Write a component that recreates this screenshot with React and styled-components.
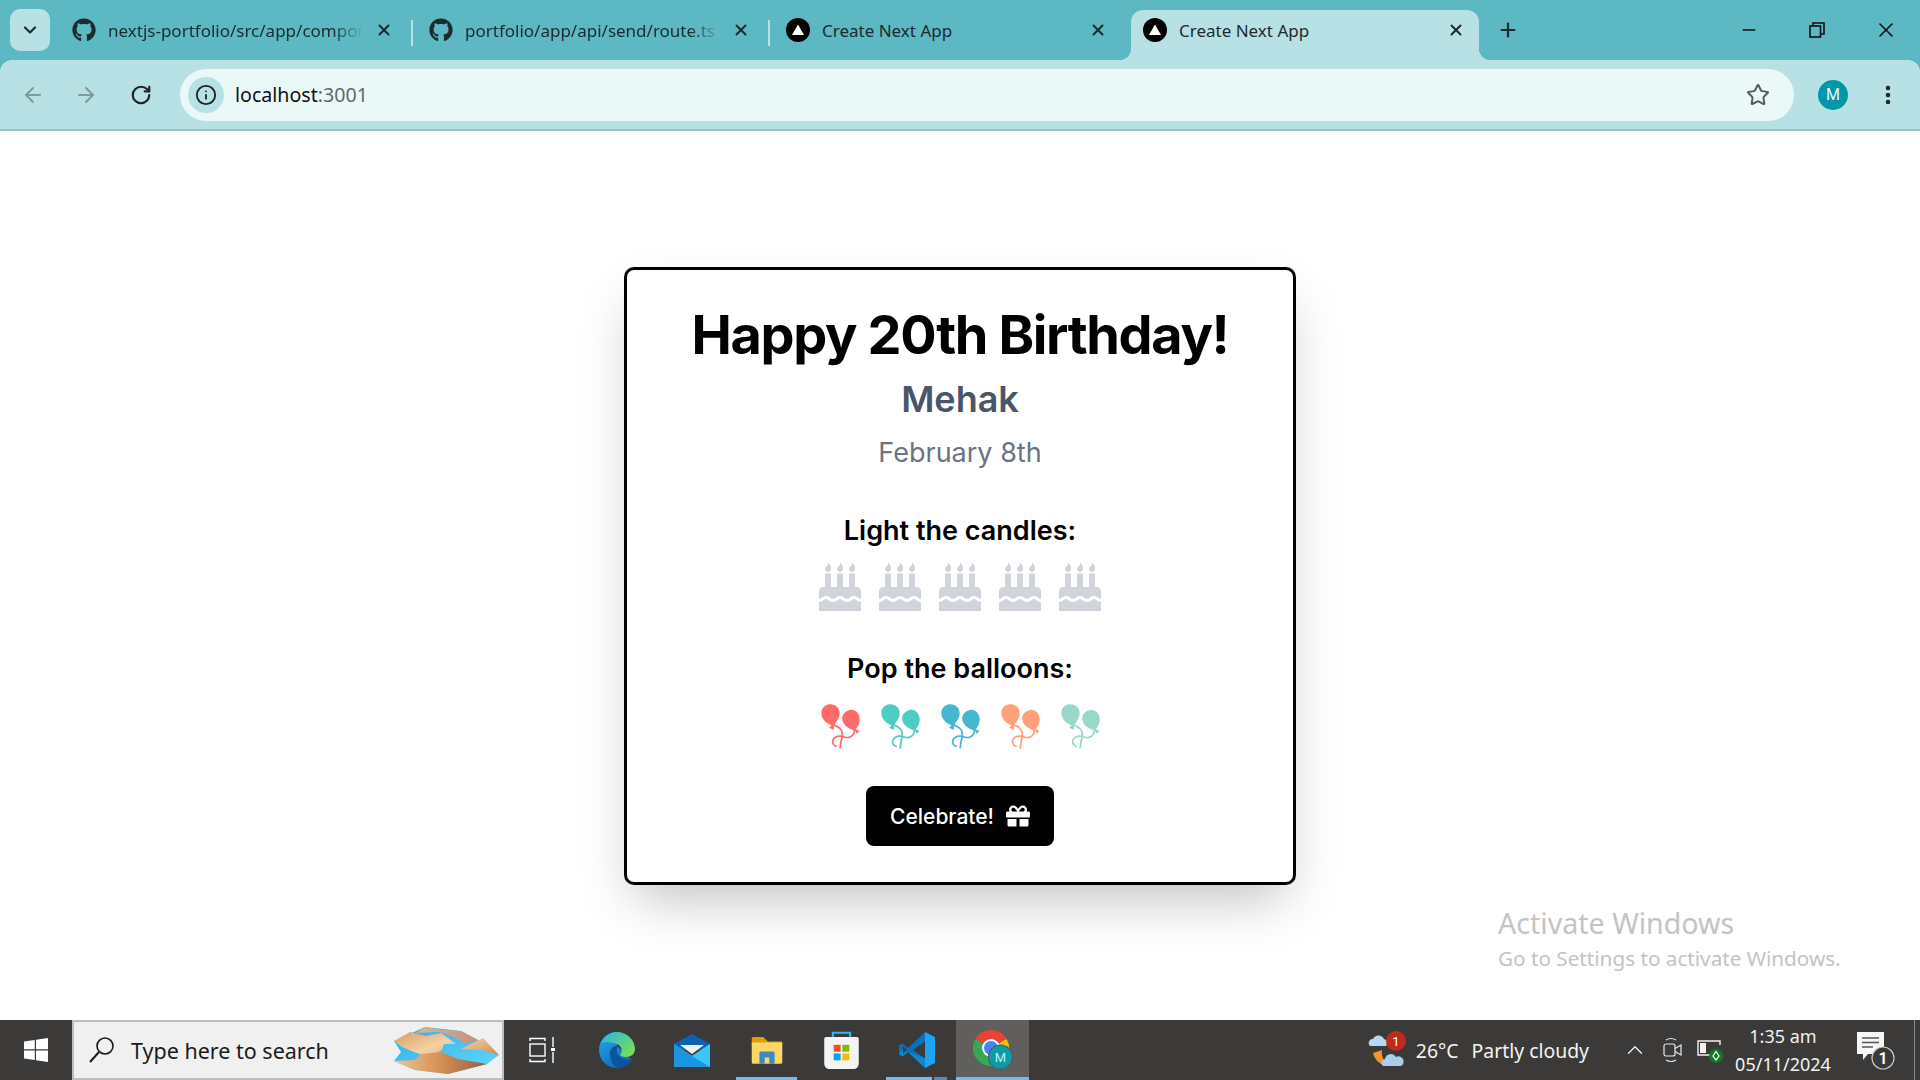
import React from 'react';
import styled, { createGlobalStyle } from 'styled-components';
import { FaGithub, FaBirthdayCake, FaGift } from 'react-icons/fa';
import { GiBalloons } from 'react-icons/gi';
import { ArrowLeft, ArrowRight, RotateCw, Info, Star, X, Plus, Minus, ChevronDown, EllipsisVertical, ChevronUp } from 'lucide-react';

const GlobalStyle = createGlobalStyle`
    html, body, #root {
        margin: 0;
        height: 100%;
    }
    body {
        overflow: hidden;
        font-family: Inter, "Liberation Sans", sans-serif;
        background: #fff;
    }
    * { box-sizing: border-box; }
`;

const Screen = styled.div`
    height: 100vh;
    display: flex;
    flex-direction: column;
    background: #5cb8c2;
`;

/* browser chrome */
const TabStrip = styled.div`
    height: 60px;
    flex: none;
    display: flex;
    align-items: flex-end;
    padding-left: 10px;
    background: #5cb8c2;
`;

const TabListButton = styled.div`
    width: 40px;
    height: 42px;
    margin: 0 10px 9px 0;
    border-radius: 10px;
    background: #b7e1e5;
    color: #1f2a2e;
    display: flex;
    align-items: center;
    justify-content: center;
`;

const Tab = styled.div`
    position: relative;
    width: ${p => p.$active ? '348px' : '357px'};
    height: 50px;
    flex: none;
    display: flex;
    align-items: center;
    padding: 0 14px 10px 12px;
    gap: 12px;
    border-radius: 12px 12px 0 0;
    background: ${p => p.$active ? '#b7e1e5' : 'transparent'};
    color: #1d2a2e;
    font-family: "Noto Sans", "Open Sans", sans-serif;
    font-size: 17px;

    &::before, &::after {
        content: '';
        display: ${p => p.$active ? 'block' : 'none'};
        position: absolute;
        bottom: 0;
        width: 12px;
        height: 12px;
    }
    &::before {
        left: -12px;
        background: radial-gradient(circle at 0 0, transparent 12px, #b7e1e5 12.5px);
    }
    &::after {
        right: -12px;
        background: radial-gradient(circle at 100% 0, transparent 12px, #b7e1e5 12.5px);
    }
`;

const TabTitle = styled.span`
    flex: 1;
    min-width: 0;
    overflow: hidden;
    white-space: nowrap;
    -webkit-mask-image: ${p => p.$fade ? 'linear-gradient(to right, #000 88%, transparent)' : 'none'};
    mask-image: ${p => p.$fade ? 'linear-gradient(to right, #000 88%, transparent)' : 'none'};
`;

const TabSep = styled.span`
    position: absolute;
    right: 4px;
    top: 10px;
    width: 2px;
    height: 26px;
    background: #b7e1e5;
`;

const TabClose = styled(X)`
    flex: none;
    margin-right: ${p => p.$gap || 0};
`;

const NewTab = styled.div`
    margin: 0 0 19px 18px;
    color: #1d2a2e;
    display: flex;
`;

const WindowControls = styled.div`
    margin-left: auto;
    height: 60px;
    display: flex;
    align-items: center;
    color: #111;
`;

const WindowButton = styled.div`
    width: 68px;
    display: flex;
    justify-content: center;
    margin-left: ${p => p.$shift || 0};
`;

const Toolbar = styled.div`
    height: 71px;
    flex: none;
    display: flex;
    align-items: center;
    padding: 0 0 0 20px;
    background: #b7e1e5;
    border-bottom: 2px solid #9fbcc0;
    border-radius: 12px 12px 0 0;
`;

const NavButton = styled.div`
    width: 26px;
    margin-right: ${p => p.$gap};
    display: flex;
    justify-content: center;
    color: ${p => p.$dim ? '#7f9aa0' : '#1f2427'};
`;

const Omnibox = styled.div`
    width: 1614px;
    height: 52px;
    display: flex;
    align-items: center;
    padding: 0 24px 0 8px;
    border-radius: 26px;
    background: #ebf8f8;
    font-family: "Noto Sans", "Open Sans", sans-serif;
    font-size: 19.6px;
    color: #111;
`;

const InfoChip = styled.div`
    width: 36px;
    height: 36px;
    margin-right: 11px;
    border-radius: 50%;
    background: #b7e1e5;
    color: #1f2427;
    display: flex;
    align-items: center;
    justify-content: center;
`;

const UrlPort = styled.span`
    color: #5f6a6d;
`;

const Address = styled.div`
    flex: 1;
`;

const Avatar = styled.div`
    width: 30px;
    height: 30px;
    margin: 0 28px 0 24px;
    border-radius: 50%;
    background: #0097a7;
    color: #e6fafa;
    font-family: Roboto, sans-serif;
    font-size: 16px;
    display: flex;
    align-items: center;
    justify-content: center;
`;

const MenuDots = styled.div`
    color: #1f2427;
    display: flex;
`;

/* page */
const Page = styled.main`
    position: relative;
    flex: 1;
    min-height: 0;
    display: flex;
    align-items: center;
    justify-content: center;
    background: #fff;
`;

const Card = styled.section`
    width: 672px;
    height: 618px;
    margin-top: 1px;
    padding: 35px 32px;
    display: flex;
    flex-direction: column;
    align-items: center;
    background: #fff;
    border: 3px solid #000;
    border-radius: 10px;
    box-shadow: 0 25px 50px -12px rgba(0, 0, 0, 0.25);
`;

const Title = styled.h1`
    margin: 0 0 12px;
    font-size: 54px;
    line-height: 60px;
    font-weight: 700;
    letter-spacing: -0.025em;
    color: #000;
`;

const Name = styled.h2`
    margin: 0 0 12px;
    font-size: 36px;
    line-height: 44px;
    font-weight: 600;
    color: #4a5568;
`;

const DateLine = styled.p`
    margin: 0 0 40px;
    font-size: 27px;
    line-height: 40px;
    color: #6b7280;
`;

const SectionTitle = styled.h3`
    margin: 0 0 ${p => p.$after};
    font-size: 27px;
    line-height: 36px;
    font-weight: 600;
    color: #000;
`;

const IconRow = styled.div`
    display: flex;
    gap: 12px;
    margin-bottom: ${p => p.$after};
`;

const IconButton = styled.div`
    width: 48px;
    height: 48px;
    display: flex;
    align-items: center;
    justify-content: center;
    color: ${p => p.$color};
`;

const CelebrateButton = styled.button`
    width: 188px;
    height: 60px;
    display: flex;
    align-items: center;
    justify-content: center;
    gap: 12px;
    border: 0;
    border-radius: 8px;
    background: #000;
    color: #fff;
    font-family: inherit;
    font-size: 21px;
    font-weight: 500;
`;

const Watermark = styled.div`
    position: absolute;
    left: 1498px;
    bottom: 48px;
    font-family: "Noto Sans", "Open Sans", sans-serif;
    color: #c4c4c4;
`;

const WatermarkTitle = styled.div`
    margin-bottom: 3px;
    font-size: 28.600px;
    line-height: 36px;
`;

const WatermarkText = styled.div`
    font-size: 20.700px;
    line-height: 28px;
`;

/* taskbar */
const Taskbar = styled.footer`
    height: 60px;
    flex: none;
    display: flex;
    align-items: stretch;
    background: #3b3a39;
    color: #f2f2f2;
    font-family: "Noto Sans", "Open Sans", sans-serif;
`;

const StartButton = styled.div`
    width: 72px;
    display: flex;
    align-items: center;
    justify-content: center;
`;

const SearchBox = styled.div`
    width: 432px;
    display: flex;
    align-items: center;
    padding: 0 3px 0 14px;
    gap: 15px;
    background: #f0f0f0;
    border: 2px solid #bdbdbd;
    color: #1a1a1a;
    font-size: 21.500px;
`;

const SearchText = styled.span`
    flex: 1;
    white-space: nowrap;
`;

const TaskSlot = styled.div`
    position: relative;
    width: ${p => p.$active ? '73px' : '75px'};
    margin-left: ${p => p.$active ? '2px' : '0'};
    display: flex;
    align-items: center;
    justify-content: center;
    background: ${p => p.$active ? '#605f5d' : 'transparent'};

    &::after {
        content: '';
        display: ${p => p.$open ? 'block' : 'none'};
        position: absolute;
        left: ${p => p.$active ? '0' : '7px'};
        right: ${p => p.$active ? '0' : '7px'};
        bottom: 0;
        height: 3px;
        background: ${p => p.$stacked
            ? 'linear-gradient(to right, #76b9ed 76%, #3b3a39 76%, #3b3a39 78%, #5a8db5 78%)'
            : '#76b9ed'};
    }
`;

const Tray = styled.div`
    margin-left: auto;
    padding-right: 5px;
    display: flex;
    align-items: center;
`;

const Weather = styled.div`
    display: flex;
    align-items: center;
    gap: 9px;
    margin-right: 33px;
    font-size: 19.400px;
    white-space: nowrap;
`;

const WeatherText = styled.span`
    margin-right: 4px;
`;

const TrayIcon = styled.div`
    display: flex;
    margin-right: ${p => p.$gap};
`;

const Clock = styled.div`
    width: 120px;
    margin-right: 12px;
    text-align: center;
    font-size: 18px;
    line-height: 28px;
`;

const Notes = styled.div`
    margin-right: 17px;
    display: flex;
`;

const DesktopEdge = styled.div`
    width: 1px;
    height: 60px;
    background: #8a8a8a;
`;

const NextIcon = () => (
    <svg width="24" height="24" viewBox="0 0 24 24" style={{ flex: 'none' }}>
        <circle cx="12" cy="12" r="12" fill="#000" />
        <path d="M12 6.500 18 17H6Z" fill="#fff" />
    </svg>
);

const RestoreIcon = () => (
    <svg width="16" height="16" viewBox="0 0 16 16" fill="none" stroke="#111" strokeWidth="1.600">
        <rect x="1" y="4" width="10.500" height="11" />
        <path d="M4 4V1h11v11h-3.500" />
    </svg>
);

const WindowsLogo = () => (
    <svg width="26" height="26" viewBox="0 0 26 26" fill="#fff">
        <path d="M1 4.500 11.800 3v9.300H1ZM13 2.800 25 1v11.300H13ZM1 13.500h10.800v9.400L1 21.500ZM13 13.500h12V25l-12-1.700Z" />
    </svg>
);

const SearchGlass = () => (
    <svg width="28" height="28" viewBox="0 0 28 28" fill="none" stroke="#1a1a1a" style={{ flex: 'none' }}>
        <circle cx="17" cy="10" r="8" strokeWidth="1.600" />
        <path d="M11 16 2 26" strokeWidth="2" />
    </svg>
);

const DesertArt = () => (
    <svg width="105" height="47" viewBox="0 0 105 47" style={{ flex: 'none' }}>
        <defs>
            <linearGradient id="duneBack" x1="0" y1="0" x2="1" y2="0">
                <stop offset="0" stopColor="#d9b59a" />
                <stop offset="1" stopColor="#c4917f" />
            </linearGradient>
            <linearGradient id="duneLeft" x1="0" y1="0" x2="1" y2="1">
                <stop offset="0" stopColor="#d99c63" />
                <stop offset="0.6" stopColor="#f3d2a6" />
                <stop offset="1" stopColor="#e0a870" />
            </linearGradient>
            <linearGradient id="duneRight" x1="0" y1="0" x2="1" y2="1">
                <stop offset="0" stopColor="#f6d8ad" />
                <stop offset="1" stopColor="#c98a55" />
            </linearGradient>
            <linearGradient id="duneFront" x1="0" y1="0" x2="1" y2="0">
                <stop offset="0" stopColor="#f0c690" />
                <stop offset="0.5" stopColor="#d58f56" />
                <stop offset="1" stopColor="#94603c" />
            </linearGradient>
            <linearGradient id="lake" x1="0" y1="0" x2="1" y2="1">
                <stop offset="0" stopColor="#2faeea" />
                <stop offset="1" stopColor="#64d8fb" />
            </linearGradient>
        </defs>
        <path d="M0 14 31 0l36 4 17 9 21 15-12 9-39 10-33-4L0 34l7-9Z" fill="url(#lake)" />
        <path d="M22 6 31 0l19 3 17 1 17 9-12 4-12-7-15-5Z" fill="url(#duneBack)" />
        <path d="M0 14 16 5l16 4 15-3 15 11-12 0-2 6-13 7-15-5-12-5Z" fill="url(#duneLeft)" />
        <path d="M67 22 89 11l16 17-18-5Z" fill="url(#duneRight)" />
        <path d="M0 34 21 33l6-6 20-2 17 7 29 5-39 10-33-4Z" fill="url(#duneFront)" />
    </svg>
);

const TaskViewIcon = () => (
    <svg width="26" height="26" viewBox="0 0 26 26" fill="none" stroke="#fff" strokeWidth="1.400">
        <path d="M1 4V1.500h15V4M1 22v2.500h15V22" />
        <rect x="1" y="7" width="15" height="12" />
        <path d="M24 0v10M24 15v11" />
        <rect x="22" y="11" width="4" height="3" fill="#fff" stroke="none" />
    </svg>
);

const EdgeIcon = () => (
    <svg width="36" height="36" viewBox="0 0 36 36">
        <defs>
            <linearGradient id="edgeA" x1="0" y1="0" x2="0.6" y2="1">
                <stop offset="0" stopColor="#2aa8e6" />
                <stop offset="1" stopColor="#0f6cbe" />
            </linearGradient>
            <linearGradient id="edgeB" x1="0" y1="0" x2="1" y2="0.7">
                <stop offset="0" stopColor="#27b4e4" />
                <stop offset="1" stopColor="#74de5c" />
            </linearGradient>
        </defs>
        <path d="M18 0C8 0 0 8 0 18s8 18 18 18c6 0 11-3 15-8L18 14Z" fill="url(#edgeA)" />
        <path d="M1.500 12C5 4 11 0 18 0c10 0 18 8 18 17 0 5-4 8-9 8-3 0-5-1-6-2 3-3 2-9-3-11-6-2-12-3-16.500 0Z" fill="url(#edgeB)" />
        <path d="M11 24c-1-6 3-11 9-11-3 3-3 8 0 11 4 4 9 4 13 3-3 5-8 9-14 9-5-2-7-7-8-12Z" fill="#0b55a0" />
    </svg>
);

const MailIcon = () => (
    <svg width="36" height="33" viewBox="0 0 36 33">
        <path d="M0 10 18 0l18 10v6H0Z" fill="#0b62b2" />
        <path d="M6 11h24L18 20Z" fill="#efefef" />
        <path d="M0 10 18 22 36 10v23H0Z" fill="#29aef0" />
        <path d="M0 10v21a2 2 0 0 0 2 2h34L0 10Z" fill="#1b96e4" />
        <path d="M36 10 18 22l18 11Z" fill="#3cc6f7" />
    </svg>
);

const FolderIcon = () => (
    <svg width="32" height="28" viewBox="0 0 42 36">
        <path d="M1 3a2 2 0 0 1 2-2h13l6 6h18a1 1 0 0 1 1 1v4H1Z" fill="#dca000" />
        <path d="M1 8h40v26a2 2 0 0 1-2 2H3a2 2 0 0 1-2-2Z" fill="#ffd766" />
        <path d="M11 36V22a2 2 0 0 1 2-2h16a2 2 0 0 1 2 2v14h-7v-8h-6v8Z" fill="#3a8bc4" />
    </svg>
);

const StoreIcon = () => (
    <svg width="35" height="38" viewBox="0 0 40 44">
        <path d="M10 8V2h20v6" fill="none" stroke="#35b6ee" strokeWidth="2.500" />
        <path d="M0 9a2 2 0 0 1 2-2h36a2 2 0 0 1 2 2v29a6 6 0 0 1-6 6H6a6 6 0 0 1-6-6Z" fill="#f4f4f4" />
        <path d="M11 16h8v8h-8Z" fill="#f25022" />
        <path d="M21 16h8v8h-8Z" fill="#7fba00" />
        <path d="M11 26h8v8h-8Z" fill="#00a4ef" />
        <path d="M21 26h8v8h-8Z" fill="#ffb900" />
    </svg>
);

const VsCodeIcon = () => (
    <svg width="36" height="36" viewBox="0 0 36 36">
        <path d="M26 0 9 16 3.500 11.500 0 13.500v9L3.500 24.500 9 20 26 36Z" fill="#0a70ba" />
        <path d="M26 36 9 20l-5.500 4.500L0 22.500 3 18l23 8Z" fill="#0c86d8" />
        <path d="M26 0l10 5v26l-10 5Z" fill="#1fa3f0" />
        <path d="M26 9.500 14 18l12 8.500ZM4 14.500v7l4-3.500Z" fill="#3b3a39" />
    </svg>
);

const ChromeIcon = () => (
    <svg width="40" height="40" viewBox="0 0 40 40">
        <path d="M18 18 2.400 9A18 18 0 0 1 33.600 9Z" fill="#ea4335" />
        <path d="M18 18 33.600 9A18 18 0 0 1 18 36Z" fill="#fbbc05" />
        <path d="M18 18V36A18 18 0 0 1 2.400 9Z" fill="#34a853" />
        <circle cx="18" cy="18" r="9" fill="#fff" />
        <circle cx="18" cy="18" r="7" fill="#4285f4" />
        <circle cx="27.500" cy="27" r="12.500" fill="#555" />
        <circle cx="27.500" cy="27" r="11.500" fill="#0e9aa7" />
        <text x="27.500" y="32" textAnchor="middle" fontSize="13" fontFamily="Roboto, sans-serif" fill="#bfeef0">M</text>
    </svg>
);

const WeatherIcon = () => (
    <svg width="40" height="40" viewBox="0 0 40 40">
        <path d="M6 23c2 8 9 14 18 13-7-3-10-9-9-16Z" fill="#f0962a" />
        <path d="M3 16a4 4 0 0 1 3-7 6 6 0 0 1 11 0 4 4 0 0 1 2 7Z" fill="#b9d7f2" />
        <path d="M16 36a4 4 0 0 1 2-7 6 6 0 0 1 11-2 5 5 0 0 1 5 9Z" fill="#a9cdee" />
        <circle cx="29" cy="11" r="10" fill="#c4281c" />
        <text x="29" y="16" textAnchor="middle" fontSize="13" fontFamily="Roboto, sans-serif" fill="#fff">1</text>
    </svg>
);

const MeetIcon = () => (
    <svg width="20" height="26" viewBox="0 0 20 26" fill="none" stroke="#e8e8e8" strokeWidth="1.200">
        <rect x="1" y="7" width="11" height="12" rx="2" />
        <path d="M12 11.500 18 8v10l-6-3.500M3 3q5-3 10 0M3 23q5 3 10 0" />
    </svg>
);

const BatteryIcon = () => (
    <svg width="26" height="26" viewBox="0 0 26 26">
        <path d="M23 8V4H1v14h12" fill="none" stroke="#f2f2f2" strokeWidth="1.400" />
        <rect x="3" y="6" width="6" height="10" fill="#f2f2f2" />
        <circle cx="19" cy="19" r="7" fill="#0f7b27" />
        <path d="M19 14.500 22 19l-3 4-3-4Z" fill="none" stroke="#fff" strokeWidth="1.200" />
    </svg>
);

const NotesIcon = () => (
    <svg width="42" height="40" viewBox="0 0 42 40">
        <path d="M2 2h27v22H13l-5 6v-6H2Z" fill="#f7f7f7" />
        <path d="M7 8h17M7 12.500h17M7 17h11" stroke="#555" strokeWidth="1.400" />
        <circle cx="28" cy="28" r="11" fill="#3b3a39" stroke="#c8c8c8" strokeWidth="1.200" />
        <text x="28" y="34" textAnchor="middle" fontSize="16" fontWeight="600" fontFamily="Roboto, sans-serif" fill="#fff">1</text>
    </svg>
);

const BALLOONS = ['#ff6b6b', '#4ecdc4', '#45b7d1', '#ffa07a', '#98d8c8'];

const App = () => {
    return (
        <Screen>
            <GlobalStyle />
            <TabStrip>
                <TabListButton><ChevronDown size={20} strokeWidth={2.600} /></TabListButton>
                <Tab>
                    <FaGithub size={24} style={{ flex: 'none' }} />
                    <TabTitle $fade>nextjs-portfolio/src/app/components/page.tsx</TabTitle>
                    <TabClose size={18} strokeWidth={2.600} $gap="10px" />
                    <TabSep />
                </Tab>
                <Tab>
                    <FaGithub size={24} style={{ flex: 'none' }} />
                    <TabTitle $fade>portfolio/app/api/send/route.ts</TabTitle>
                    <TabClose size={18} strokeWidth={2.600} $gap="10px" />
                    <TabSep />
                </Tab>
                <Tab>
                    <NextIcon />
                    <TabTitle>Create Next App</TabTitle>
                    <TabClose size={18} strokeWidth={2.600} $gap="10px" />
                </Tab>
                <Tab $active>
                    <NextIcon />
                    <TabTitle>Create Next App</TabTitle>
                    <TabClose size={18} strokeWidth={2.600} />
                </Tab>
                <NewTab><Plus size={22} strokeWidth={2.400} /></NewTab>
                <WindowControls>
                    <WindowButton><Minus size={20} strokeWidth={1.800} /></WindowButton>
                    <WindowButton><RestoreIcon /></WindowButton>
                    <WindowButton $shift="1px"><X size={24} strokeWidth={1.600} /></WindowButton>
                </WindowControls>
            </TabStrip>
            <Toolbar>
                <NavButton $dim $gap="27px"><ArrowLeft size={24} strokeWidth={2} /></NavButton>
                <NavButton $dim $gap="29px"><ArrowRight size={24} strokeWidth={2} /></NavButton>
                <NavButton $gap="26px"><RotateCw size={22} strokeWidth={2.400} /></NavButton>
                <Omnibox>
                    <InfoChip><Info size={22} strokeWidth={2} /></InfoChip>
                    <Address>localhost<UrlPort>:3001</UrlPort></Address>
                    <Star size={24} strokeWidth={2} color="#545b5f" />
                </Omnibox>
                <Avatar>M</Avatar>
                <MenuDots><EllipsisVertical size={24} strokeWidth={2.600} /></MenuDots>
            </Toolbar>
            <Page>
                <Card>
                    <Title>Happy 20th Birthday!</Title>
                    <Name>Mehak</Name>
                    <DateLine>February 8th</DateLine>
                    <SectionTitle $after="14px">Light the candles:</SectionTitle>
                    <IconRow $after="40px">
                        {[0, 1, 2, 3, 4].map(i => (
                            <IconButton key={i} $color="#d1d5db"><FaBirthdayCake size={48} /></IconButton>
                        ))}
                    </IconRow>
                    <SectionTitle $after="15px">Pop the balloons:</SectionTitle>
                    <IconRow $after="36px">
                        {BALLOONS.map(c => (
                            <IconButton key={c} $color={c}><GiBalloons size={48} /></IconButton>
                        ))}
                    </IconRow>
                    <CelebrateButton>Celebrate! <FaGift size={24} /></CelebrateButton>
                </Card>
                <Watermark>
                    <WatermarkTitle>Activate Windows</WatermarkTitle>
                    <WatermarkText>Go to Settings to activate Windows.</WatermarkText>
                </Watermark>
            </Page>
            <Taskbar>
                <StartButton><WindowsLogo /></StartButton>
                <SearchBox>
                    <SearchGlass />
                    <SearchText>Type here to search</SearchText>
                    <DesertArt />
                </SearchBox>
                <TaskSlot><TaskViewIcon /></TaskSlot>
                <TaskSlot><EdgeIcon /></TaskSlot>
                <TaskSlot><MailIcon /></TaskSlot>
                <TaskSlot $open><FolderIcon /></TaskSlot>
                <TaskSlot><StoreIcon /></TaskSlot>
                <TaskSlot $open $stacked><VsCodeIcon /></TaskSlot>
                <TaskSlot $open $active><ChromeIcon /></TaskSlot>
                <Tray>
                    <Weather>
                        <WeatherIcon />
                        <WeatherText>26°C</WeatherText>
                        <span>Partly cloudy</span>
                    </Weather>
                    <TrayIcon $gap="15px"><ChevronUp size={26} strokeWidth={1.200} /></TrayIcon>
                    <TrayIcon $gap="14px"><MeetIcon /></TrayIcon>
                    <TrayIcon $gap="0"><BatteryIcon /></TrayIcon>
                    <Clock>1:35 am<br />05/11/2024</Clock>
                    <Notes><NotesIcon /></Notes>
                    <DesktopEdge />
                </Tray>
            </Taskbar>
        </Screen>
    );
};

export default App;
